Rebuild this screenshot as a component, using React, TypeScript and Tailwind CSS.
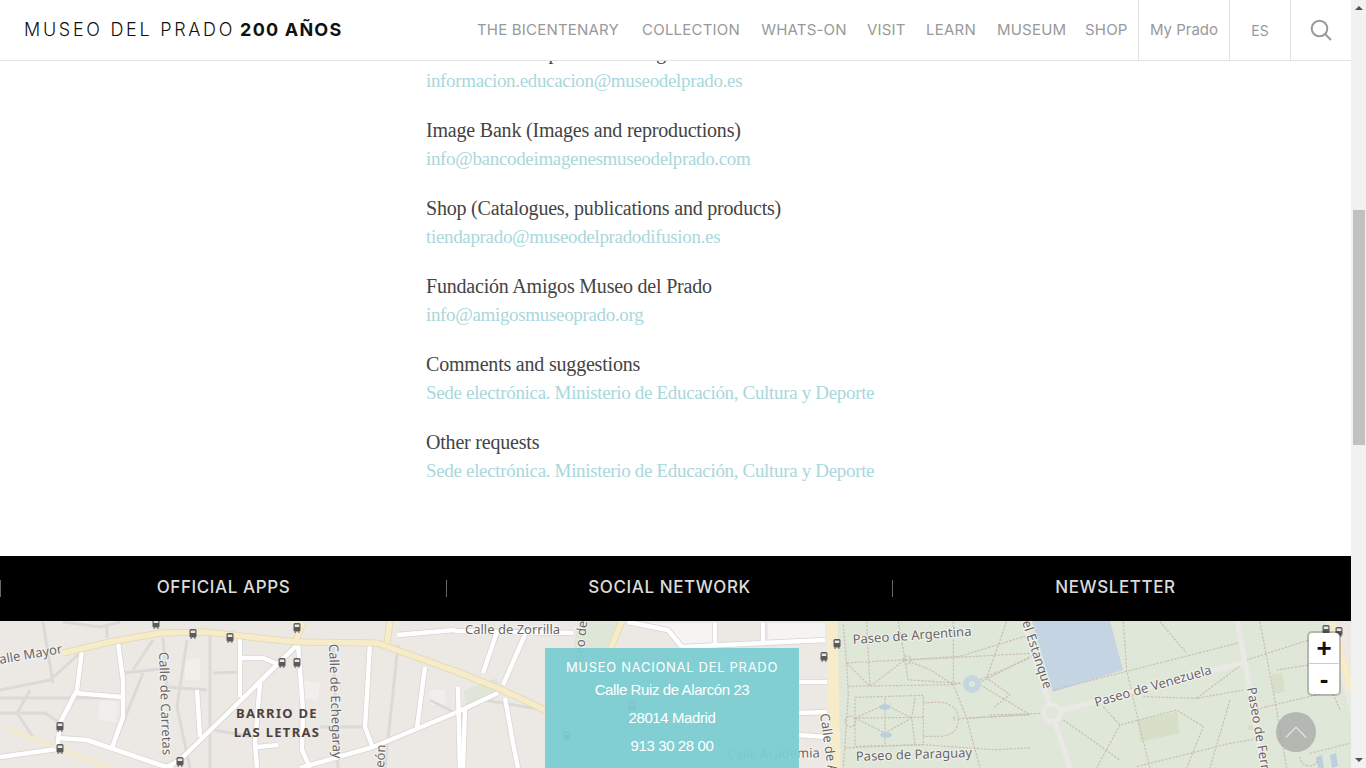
const navItems = [
  { label: 'THE BICENTENARY', w: 'w-[146px]' },
  { label: 'COLLECTION', w: 'w-[100px]' },
  { label: 'WHATS-ON', w: 'w-[86px]' },
  { label: 'VISIT', w: 'w-[38px]' },
  { label: 'LEARN', w: 'w-[52px]' },
  { label: 'MUSEUM', w: 'w-[68px]' },
  { label: 'SHOP', w: 'w-[42px]' },
]

const contacts = [
  { title: 'Information on public learning', link: 'informacion.educacion@museodelprado.es' },
  { title: 'Image Bank (Images and reproductions)', link: 'info@bancodeimagenesmuseodelprado.com' },
  { title: 'Shop (Catalogues, publications and products)', link: 'tiendaprado@museodelpradodifusion.es' },
  { title: 'Fundación Amigos Museo del Prado', link: 'info@amigosmuseoprado.org' },
  { title: 'Comments and suggestions', link: 'Sede electrónica. Ministerio de Educación, Cultura y Deporte' },
  { title: 'Other requests', link: 'Sede electrónica. Ministerio de Educación, Cultura y Deporte' },
]

// Calles del mapa, en coordenadas de la captura
const minorStreets = [
  'M43 622 L53 683', 'M0 698 L122 698', 'M0 690 L50 680 L80 653', 'M30 690 L17 713 L33 737', 'M0 713 L45 713 L60 723',
  'M123 673 L160 669', 'M153 640 L133 670', 'M163 638 L167 687 L207 690', 'M213 673 L240 672', 'M213 730 L255 737',
  'M320 727 L365 727', 'M143 673 L113 748', 'M187 640 L177 707 L190 768', 'M63 622 L100 627 L120 622', 'M107 638 L107 627',
  'M333 645 L338 768', 'M483 700 L545 710', 'M430 700 L455 713', 'M398 645 L385 768', 'M210 635 L210 768',
]
const whiteRoads = [
  'M82 650 L77 690 L60 723 L57 750', 'M118 643 L123 680 L123 717 L112 748',
  'M58 738 L87 740 L160 765 L173 768', 'M75 693 L122 697', 'M0 757 L57 749',
  'M240 638 L240 697', 'M240 658 L263 658 L280 665', 'M297 645 L180 760 L165 768',
  'M298 643 L303 710 L302 750 L310 768', 'M260 683 L255 743 L257 768', 'M197 690 L200 737', 'M257 747 L278 745',
  'M370 643 L365 727 L373 748', 'M425 667 L417 728', 'M455 713 L373 747 L300 768',
  'M397 635 L455 630', 'M455 631 L573 633', 'M527 630 L503 685', 'M497 632 L483 673',
  'M455 713 L498 693', 'M458 687 L460 768', 'M505 698 L513 743 L518 768', 'M465 710 L463 768',
  'M798 682 L827 682', 'M798 713 L827 712', 'M798 735 L827 737', 'M682 647 L825 640',
  'M715 623 L715 647', 'M763 623 L763 643', 'M628 622 L668 630 L682 647',
]
const parkRoads = [
  'M1023 621 L1052 713 L1070 768', 'M1052 713 L1245 662', 'M1237 621 L1245 662 L1263 768',
]
const busStops = [
  [156, 624], [193, 634], [230, 638], [297, 628], [282, 663], [297, 663], [60, 727], [60, 749],
  [180, 762], [837, 644], [824, 657], [632, 707], [567, 736], [1326, 630], [1339, 632],
]
const mapLabels = [
  { t: 'alle Mayor', x: 0, y: 664, r: -10 },
  { t: 'Calle de Carretas', x: 159, y: 652, r: 88 },
  { t: 'Calle de Echegaray', x: 329, y: 644, r: 88 },
  { t: 'eón', x: 384, y: 768, r: -86 },
  { t: 'Calle de Zorrilla', x: 465, y: 634, r: 0 },
  { t: 'seo de', x: 583, y: 661, r: -84 },
  { t: 'Calle de A', x: 820, y: 714, r: 82 },
  { t: 'Calle Academia', x: 727, y: 759, r: -1 },
  { t: 'Paseo de Argentina', x: 853, y: 644, r: -4 },
  { t: 'Paseo de Paraguay', x: 856, y: 761, r: -2 },
  { t: 'el Estanque', x: 1022, y: 622, r: 72 },
  { t: 'Paseo de Venezuela', x: 1096, y: 707, r: -16 },
  { t: 'Paseo de Fern', x: 1247, y: 688, r: 80 },
]

function Bus({ x, y }: { x: number; y: number }) {
  return (
    <g transform={`translate(${x - 3.5} ${y - 5})`}>
      <rect width="7" height="8.5" rx="1.5" fill="#5a5a5a" />
      <rect x="1.2" y="1.5" width="4.6" height="2.5" fill="#e8e6e2" />
      <rect x="1" y="8.5" width="1.4" height="1.2" fill="#5a5a5a" />
      <rect x="4.6" y="8.5" width="1.4" height="1.2" fill="#5a5a5a" />
    </g>
  )
}

function MapDrawing() {
  return (
    <svg className="block" width="1351" height="147" viewBox="0 621 1351 147">
      <rect x="0" y="621" width="1351" height="147" fill="#ece9e5" />

      {/* manzanas */}
      <path d="M100 700 L118 702 L116 722 L98 720 Z M300 680 L320 683 L318 700 L298 698 Z M430 690 L445 690 L445 705 L430 705 Z M185 660 L200 658 L200 680 L185 680 Z M720 650 L760 648 L760 675 L720 675 Z" fill="#f1efec" />
      <path d="M640 623 L712 623 L712 645 L682 645 L665 628 Z M768 623 L825 623 L825 638 L768 641 Z" fill="#f5f4f2" />

      {/* parques */}
      <path d="M578 621 L620 621 L608 648 L574 648 Z" fill="#dde6d7" />
      <path d="M464 690 L497 678 L500 692 L466 712 Z" fill="#dde6d7" />
      <path d="M838 621 L1325 621 L1351 715 L1351 768 L838 768 Z" fill="#dfe7d8" />
      <path d="M1032 621 L1110 621 L1123 670 L1053 692 Z" fill="#c5d4e2" />
      <path d="M1137 720 L1177 712 L1180 733 L1140 742 Z" fill="#d8dfc9" />
      <path d="M1271 675 L1282 673 L1285 692 L1274 694 Z M1248 725 L1253 725 L1253 730 L1248 730 Z" fill="#d8dfc9" />
      <path d="M1316 757 L1322 755 L1324 768 L1318 768 Z M1330 755 L1336 753 L1338 766 L1332 768 Z" fill="#bccfe0" />

      {/* sendas */}
      <g transform="translate(780 618) scale(0.3333)" fill="none" stroke="#cbbfb3" strokeWidth="3.6" strokeDasharray="7 4">
        <path d="M190 20 L200 140 L205 230 L190 450 M200 135 L375 125 L540 115 L750 50 M260 10 L270 205 M205 205 L520 200 L545 195" />
        <path d="M200 135 L270 205 L375 125 L450 155 L520 200 M375 125 L385 190 M355 10 L375 125 M520 10 L520 200 L560 300 L600 450" />
        <path d="M680 10 L620 180 L690 230 L640 270 M600 185 L750 120 M600 200 L750 290 M565 300 L750 290" />
        <path d="M225 238 L430 232 L430 380 L225 385 Z M405 240 L395 300 L405 380 M315 240 L315 380 M225 300 L430 298 M225 300 L315 260 L395 300 L315 345 Z" />
        <path d="M430 255 L480 252 Q535 260 535 302 Q535 352 480 355 L430 355 M535 302 L750 290 M195 390 L430 380 L640 395 L750 390" />
        <path d="M370 126 a12 12 0 1 0 24 0 a12 12 0 1 0 -24 0 M195 310 a16 16 0 1 0 32 0 a16 16 0 1 0 -32 0" />
      </g>
      <g transform="translate(910 610) scale(0.3333)" fill="none" stroke="#cbbfb3" strokeWidth="3.6" strokeDasharray="7 4">
        <path d="M0 150 L360 130 M0 210 L155 220 M215 215 L370 135 M640 35 L650 180 L680 310 L720 474 M400 310 L240 315 M430 240 L1000 95 M750 35 L830 130" />
        <path d="M460 330 L630 450 M580 290 L630 345 L800 300 L880 350 L830 474 M860 265 L1000 160 M630 345 L560 474 M1010 150 L1290 60" />
        <path d="M1100 180 L1230 160 L1290 300 M1050 35 L1100 300 L1130 474 M1030 300 L1280 240 M680 470 L960 400 L1050 385 M700 260 L860 265 L1000 240 M960 270 L900 474 M1200 430 L1320 400" />
        <path d="M1170 440 a28 28 0 1 0 56 0" />
      </g>

      {/* fuentes */}
      <circle cx="972" cy="684" r="9" fill="#c5d5e4" />
      <circle cx="972" cy="684" r="3" fill="#dfe7d8" />
      <ellipse cx="885" cy="707" rx="6" ry="2.8" fill="#bccfe0" />
      <ellipse cx="886" cy="735" rx="6" ry="2.8" fill="#bccfe0" />
      <path d="M953 718 L955 715 L955 722 Z" fill="#bccfe0" />

      {/* calles */}
      {minorStreets.map((d) => (
        <path key={d} d={d} fill="none" stroke="#dcdad7" strokeWidth="3" />
      ))}
      {whiteRoads.map((d) => (
        <path key={d} d={d} fill="none" stroke="#d6d4d1" strokeWidth="6" strokeLinejoin="round" />
      ))}
      {whiteRoads.map((d) => (
        <path key={d} d={d} fill="none" stroke="#ffffff" strokeWidth="4.5" strokeLinejoin="round" />
      ))}
      {parkRoads.map((d) => (
        <path key={d} d={d} fill="none" stroke="#ebe9e6" strokeWidth="5" />
      ))}
      <circle cx="1052" cy="713" r="8.5" fill="#dfe7d8" stroke="#ebe9e6" strokeWidth="4.5" />

      {/* avenidas amarillas */}
      <g fill="none" stroke="#e6d6b0" strokeWidth="7" strokeLinejoin="round">
        <path d="M63 653 L110 642 L160 633 L207 632 L250 637 L297 642 L377 643 L455 671 L498 688 L545 710" />
        <path d="M295 643 L303 622 M387 643 L390 621 M622 621 L610 650 M832 621 L835 768 M1332 621 L1351 690" />
      </g>
      <g fill="none" stroke="#f6ecc9" strokeWidth="5.5" strokeLinejoin="round">
        <path d="M63 653 L110 642 L160 633 L207 632 L250 637 L297 642 L377 643 L455 671 L498 688 L545 710" />
        <path d="M295 643 L303 622 M387 643 L390 621 M622 621 L610 650" />
      </g>
      <path d="M832 621 L835 768" fill="none" stroke="#f6ecc9" strokeWidth="11" />
      <path d="M1332 621 L1351 690" fill="none" stroke="#f6ecc9" strokeWidth="7" />
      <path d="M5 728 L50 745 L110 768" fill="none" stroke="#f3e9cd" strokeWidth="4" />

      {busStops.map(([x, y]) => (
        <Bus key={`${x}-${y}`} x={x} y={y} />
      ))}

      {/* rótulos */}
      <g fontFamily="'Noto Sans', sans-serif" fontSize="13" fill="#6a6666" stroke="#ffffff" strokeWidth="2" strokeOpacity="0.55" paintOrder="stroke">
        {mapLabels.map((l) => (
          <text key={l.t} x={l.x} y={l.y} transform={`rotate(${l.r} ${l.x} ${l.y})`}>
            {l.t}
          </text>
        ))}
      </g>
      <g fontFamily="'Noto Sans', sans-serif" fontSize="13" fontWeight="700" fill="#503f42" letterSpacing="1.3" textAnchor="middle">
        <text x="277" y="718">BARRIO DE</text>
        <text x="277" y="737">LAS LETRAS</text>
      </g>
    </svg>
  )
}

export default function App() {
  return (
    <div className="flex h-[768px] w-full overflow-hidden bg-white font-['Inter',sans-serif]">
      <div className="relative flex min-w-0 flex-1 flex-col">
        {/* Cabecera */}
        <header className="z-10 flex h-[61px] shrink-0 items-center border-b border-[#e3e3e3] bg-white pl-6">
          <div className="flex-1 whitespace-nowrap text-[18px] leading-none tracking-[2.7px] text-[#111]">
            <span className="font-light">MUSEO DEL PRADO</span>
            <span className="ml-[5px] font-bold tracking-[1.2px]">200 AÑOS</span>
          </div>
          <nav className="flex h-full items-center text-[#999]">
            <div className="flex gap-5 text-[15px] tracking-[0.2px]">
              {navItems.map((item) => (
                <a key={item.label} className={`${item.w} whitespace-nowrap text-center`}>
                  {item.label}
                </a>
              ))}
            </div>
            <a className="ml-[11px] flex h-full w-[91px] items-center justify-center border-l border-[#e3e3e3] text-[15px]">My Prado</a>
            <a className="flex h-full w-[61px] items-center justify-center border-l border-[#e3e3e3] text-[14px]">ES</a>
            <div className="flex h-full w-[61px] items-center justify-center border-l border-[#e3e3e3]">
              <svg width="22" height="22" viewBox="0 0 22 22" fill="none" stroke="#999" strokeWidth="2">
                <circle cx="9.5" cy="9.5" r="7.8" />
                <path d="M15 15 L21 21" />
              </svg>
            </div>
          </nav>
        </header>

        {/* Contactos */}
        <main className="min-h-0 flex-1 overflow-hidden pl-[426px] font-['Liberation_Serif',serif]">
          <div className="-mt-[23px] flex flex-col gap-[21px]">
            {contacts.map((c, i) => (
              <div key={i} className="whitespace-nowrap">
                <p className="text-[20px] leading-[29px] tracking-[-0.2px] text-[#444]">{c.title}</p>
                <a className="block text-[19px] leading-[28px] tracking-[-0.33px] text-[#a9d7dc]">{c.link}</a>
              </div>
            ))}
          </div>
        </main>

        {/* Banda negra */}
        <div className="grid h-[65px] shrink-0 grid-cols-[446px_446px_446px] items-center bg-black text-[#dcdcdc]">
          {['OFFICIAL APPS', 'SOCIAL NETWORK', 'NEWSLETTER'].map((t) => (
            <div key={t} className="h-[17px] border-l border-[#666] text-center text-[17px] font-medium leading-[15px] tracking-[0.6px]">
              {t}
            </div>
          ))}
        </div>

        {/* Mapa */}
        <div className="relative h-[147px] shrink-0 overflow-hidden">
          <MapDrawing />
          <div className="absolute left-[545px] top-[27px] h-[130px] w-[254px] bg-[#7bced2]/95 pt-[10px] text-center text-white">
            <div className="text-[13px] leading-[18px] tracking-[0.7px]">MUSEO NACIONAL DEL PRADO</div>
            <div className="font-['Liberation_Sans',sans-serif] text-[15px] leading-[28px] tracking-[-0.4px]">
              <p>Calle Ruiz de Alarcón 23</p>
              <p>28014 Madrid</p>
              <p>913 30 28 00</p>
            </div>
          </div>
          <div className="absolute left-[1309px] top-3 flex w-[30px] flex-col overflow-hidden rounded-[3px] bg-white text-center font-['Liberation_Sans',sans-serif] text-[26px] font-bold leading-[30px] text-[#111] shadow-[0_0_0_2px_rgba(0,0,0,0.2)]">
            <span className="h-[31px] border-b border-[#ccc]">+</span>
            <span className="h-[30px]">-</span>
          </div>
          <div className="absolute left-[1276px] top-[91px] flex h-10 w-10 items-center justify-center rounded-full bg-[#a3a3a3]/70">
            <svg width="22" height="12" viewBox="0 0 22 12" fill="none" stroke="#e4e4e4" strokeWidth="1.2">
              <path d="M1 11.5 L11 1 L21 11.5" />
            </svg>
          </div>
        </div>
      </div>

      {/* Barra de scroll */}
      <div className="flex w-[15px] shrink-0 flex-col items-center bg-[#f1f1f1]">
        <div className="mt-1.5 h-0 w-0 border-x-[4px] border-b-[4px] border-x-transparent border-b-[#505050]" />
        <div className="mt-[200px] h-[235px] w-[12px] bg-[#c1c1c1]" />
        <div className="mb-1.5 mt-auto h-0 w-0 border-x-[4px] border-t-[4px] border-x-transparent border-t-[#505050]" />
      </div>
    </div>
  )
}
